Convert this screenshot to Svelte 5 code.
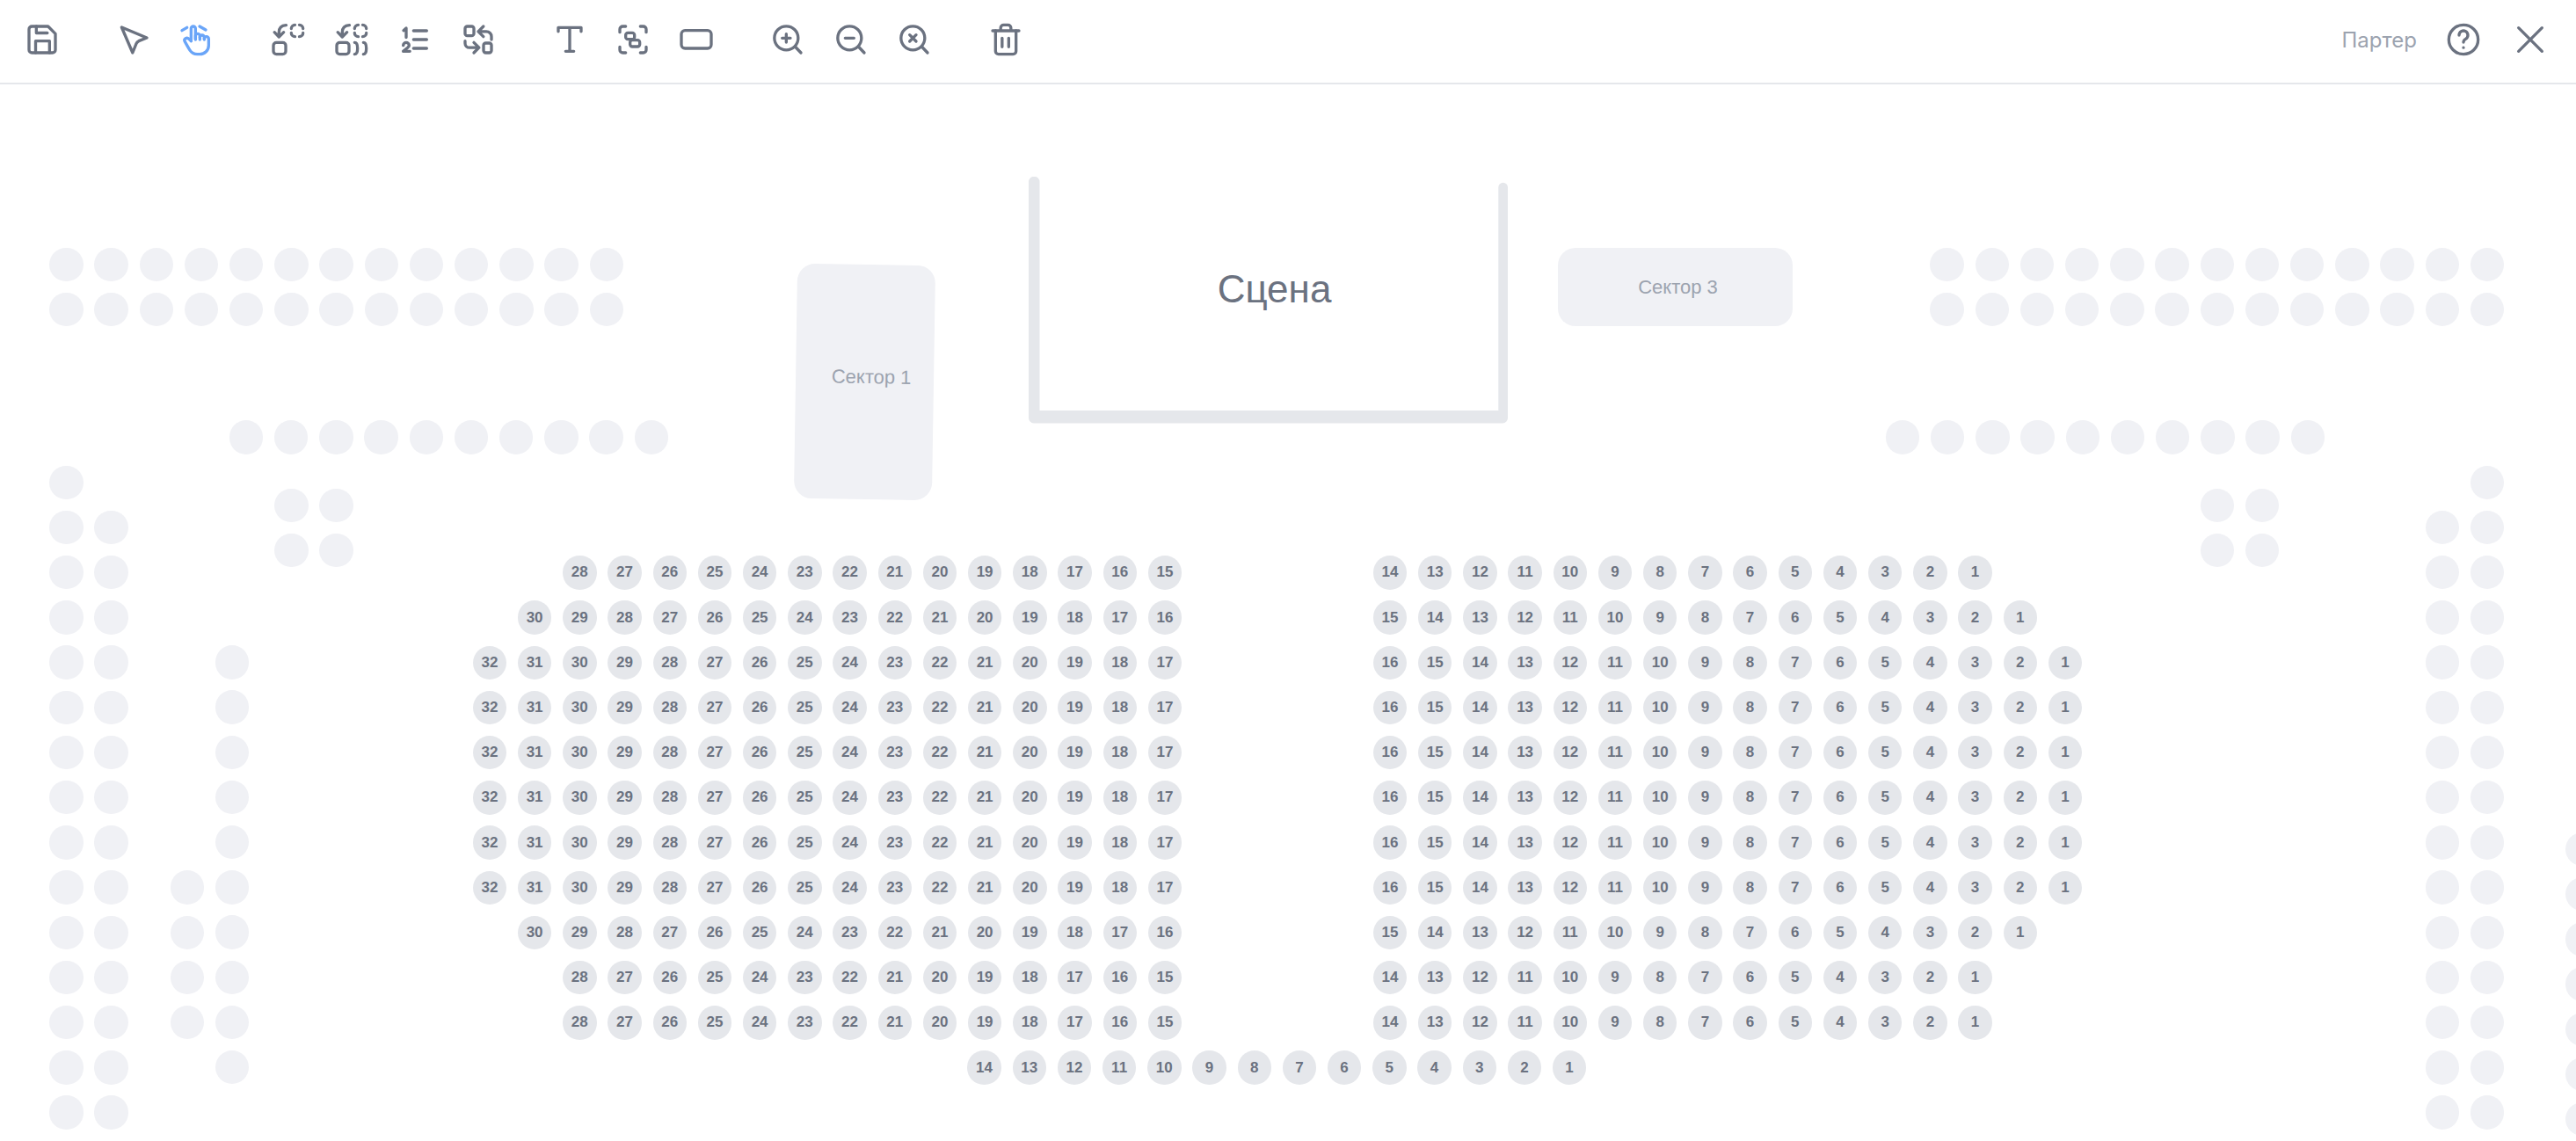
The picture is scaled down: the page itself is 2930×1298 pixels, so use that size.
<script>
	// seat plan geometry, all in page pixels
	const STEP = 51.2;
	const TOP = 96;

	function range(n, fn) {
		return Array.from({ length: n }, (_, i) => fn(i));
	}

	// blank seats (not in the current sector)
	const blank = [];
	function addGrid(x, y, cols, rows) {
		for (let r = 0; r < rows; r++) {
			for (let c = 0; c < cols; c++) {
				blank.push({ x: x + c * STEP, y: y + r * STEP });
			}
		}
	}
	addGrid(75.4, 301, 13, 2);
	addGrid(2214.6, 301, 13, 2);
	addGrid(280, 497.5, 10, 1);
	addGrid(2164, 497.5, 10, 1);
	addGrid(331.3, 574.7, 2, 2);
	addGrid(2522, 574.7, 2, 2);
	addGrid(75.4, 548.7, 1, 16);
	addGrid(126.6, 599.9, 1, 14);
	addGrid(212.8, 1009.6, 1, 4);
	addGrid(263.8, 753.3, 1, 10);
	addGrid(2829, 548.7, 1, 16);
	addGrid(2777.7, 599.9, 1, 14);
	addGrid(2937.5, 966, 1, 7);

	// numbered seats
	const seats = [];
	function addRow(x, y, from, to) {
		for (let n = from, i = 0; n >= to; n--, i++) {
			seats.push({ x: x + i * STEP, y, n });
		}
	}
	const leftRows = [
		[659.3, 28, 15],
		[608.1, 30, 16],
		[556.9, 32, 17],
		[556.9, 32, 17],
		[556.9, 32, 17],
		[556.9, 32, 17],
		[556.9, 32, 17],
		[556.9, 32, 17],
		[608.1, 30, 16],
		[659.3, 28, 15],
		[659.3, 28, 15]
	];
	const rightFrom = [14, 15, 16, 16, 16, 16, 16, 16, 15, 14, 14];
	range(11, (i) => {
		const y = 651.3 + i * STEP;
		addRow(leftRows[i][0], y, leftRows[i][1], leftRows[i][2]);
		addRow(1581, y, rightFrom[i], 1);
	});
	addRow(1119.5, 651.3 + 11 * STEP, 14, 1);
</script>

<div class="page">
	<header class="toolbar">
		<div class="group">
			<button class="tool" aria-label="Сохранить">
				<svg viewBox="0 0 24 24">
					<path d="M3 5a2 2 0 0 1 2-2h11l5 5v11a2 2 0 0 1-2 2H5a2 2 0 0 1-2-2z" />
					<path d="M8 3v4.500h7.500" />
					<path d="M7.500 21v-8h9.500v8" />
				</svg>
			</button>
		</div>
		<div class="group">
			<button class="tool" aria-label="Выделение">
				<svg viewBox="0 0 24 24">
					<path d="M3.800 3.600 21 10.800l-5.500 2.200q-1.200.6-1.700 1.800L11.300 21z" />
				</svg>
			</button>
			<button class="tool active" aria-label="Рука">
				<svg viewBox="0 0 24 24">
					<path d="M8 13V4.500a1.500 1.500 0 0 1 3 0V12" />
					<path d="M11 11.500v-2a1.500 1.500 0 0 1 3 0V12" />
					<path d="M14 10.500a1.500 1.500 0 0 1 3 0V12" />
					<path d="M17 11.500a1.500 1.500 0 0 1 3 0V16a6 6 0 0 1-6 6h-2 .208a6 6 0 0 1-5.012-2.700L7 19c-.312-.479-1.407-2.388-3.286-5.728a1.500 1.500 0 0 1 .536-2.022 1.867 1.867 0 0 1 2.280.280L8 13" />
					<path d="M1.800 5.800 5.200 3.800" />
					<path d="M13.800 3 18 5.400" />
				</svg>
			</button>
		</div>
		<div class="group">
			<button class="tool" aria-label="Добавить место">
				<svg viewBox="0 0 24 24">
					<path d="M10.500 2.200Q5.600 2.500 5.600 7v3M2.500 7l3.100 3.200L8.800 7" />
					<path d="M14 4.500A2.500 2.500 0 0 1 16.500 2M19.500 2A2.500 2.500 0 0 1 22 4.500M22 7.500A2.500 2.500 0 0 1 19.500 10M16.500 10A2.500 2.500 0 0 1 14 7.500" />
					<rect x="1.800" y="14" width="8.400" height="8" rx="2" />
				</svg>
			</button>
			<button class="tool" aria-label="Добавить ряд">
				<svg viewBox="0 0 24 24">
					<path d="M10.500 2.200Q5.600 2.500 5.600 7v3M2.500 7l3.100 3.200L8.800 7" />
					<path d="M14 4.500A2.500 2.500 0 0 1 16.500 2M19.500 2A2.500 2.500 0 0 1 22 4.500M22 7.500A2.500 2.500 0 0 1 19.500 10M16.500 10A2.500 2.500 0 0 1 14 7.500" />
					<rect x="1.800" y="14" width="8.400" height="8" rx="2" />
					<path d="M14 14c1.200 0 2 1.600 2 4s-.8 4-2 4M20 14c1.200 0 2 1.600 2 4s-.8 4-2 4" />
				</svg>
			</button>
			<button class="tool" aria-label="Нумерация">
				<svg viewBox="0 0 24 24">
					<path d="M11 6h9M11 12h9M11 18h9" />
					<path d="M6 10.500V4.200L4.200 5.800" />
					<path d="M4 16a2 2 0 1 1 4 0c0 .6-.5 1-1 1.500L4 20h4.500" />
				</svg>
			</button>
			<button class="tool" aria-label="Поменять местами">
				<svg viewBox="0 0 24 24">
					<rect x="3" y="3" width="6" height="6.400" rx="1.500" />
					<rect x="15.600" y="14.400" width="5.400" height="6.600" rx="1.500" />
					<path d="M12.500 6.500h5A3.500 3.500 0 0 1 21 10v2M15.500 3 12 6.500l3.500 3.500" />
					<path d="M3 13v1.500a3 3 0 0 0 3 3h6.500M9 14l3.500 3.500L9 21" />
				</svg>
			</button>
		</div>
		<div class="group">
			<button class="tool" aria-label="Текст">
				<svg viewBox="0 0 24 24">
					<path d="M4.200 6.500V3.800h15.600v2.700M12 3.800V20M9.200 20h5.600" />
				</svg>
			</button>
			<button class="tool" aria-label="Сгруппировать">
				<svg viewBox="0 0 24 24">
					<path d="M3 7V5a2 2 0 0 1 2-2h2M17 3h2a2 2 0 0 1 2 2v2M21 17v2a2 2 0 0 1-2 2h-2M7 21H5a2 2 0 0 1-2-2v-2" />
					<rect x="7" y="7.400" width="6" height="4.400" rx="1.500" />
					<rect x="10" y="12.400" width="6.600" height="4.400" rx="1.500" />
				</svg>
			</button>
			<button class="tool" aria-label="Прямоугольник">
				<svg viewBox="0 0 24 24">
					<rect x="1.800" y="5.800" width="20.400" height="12.200" rx="2.500" />
				</svg>
			</button>
		</div>
		<div class="group">
			<button class="tool" aria-label="Увеличить">
				<svg viewBox="0 0 24 24">
					<circle cx="11" cy="11" r="8.100" />
					<path d="M17 16.800 21 21M8.200 11h5.600M11 8.200v5.600" />
				</svg>
			</button>
			<button class="tool" aria-label="Уменьшить">
				<svg viewBox="0 0 24 24">
					<circle cx="11" cy="11" r="8.100" />
					<path d="M17 16.800 21 21M8 11h6" />
				</svg>
			</button>
			<button class="tool" aria-label="Сбросить масштаб">
				<svg viewBox="0 0 24 24">
					<circle cx="11" cy="11" r="8.100" />
					<path d="M17 16.800 21 21M8.800 8.800l4.400 4.400M13.200 8.800l-4.400 4.400" />
				</svg>
			</button>
		</div>
		<div class="group">
			<button class="tool" aria-label="Удалить">
				<svg viewBox="0 0 24 24">
					<path d="M3 6h18M8.500 6V4a2 2 0 0 1 2-2h3a2 2 0 0 1 2 2v2" />
					<path d="M5 6v14a2 2 0 0 0 2 2h10a2 2 0 0 0 2-2V6" />
					<path d="M9.500 11v6M14 11v6" />
				</svg>
			</button>
		</div>
		<div class="right">
			<span class="hall">Партер</span>
			<button class="tool" aria-label="Справка">
				<svg viewBox="0 0 24 24">
					<circle cx="12" cy="12" r="10" />
					<path d="M12 17.500v.01M9 9a3 3 0 1 1 4.500 2.600c-1 .6-1.500 1.100-1.500 2.200" />
				</svg>
			</button>
			<button class="tool" aria-label="Закрыть">
				<svg viewBox="0 0 24 24">
					<path d="M4 4l16 16M20 4 4 20" />
				</svg>
			</button>
		</div>
	</header>

	<main class="plan">
		{#each blank as s}
			<span class="seat blank" style="left:{s.x}px;top:{s.y - TOP}px"></span>
		{/each}
		{#each seats as s}
			<span class="seat" style="left:{s.x}px;top:{s.y - TOP}px">{s.n}</span>
		{/each}

		<div class="stage">
			<svg viewBox="0 0 545 281" width="545" height="281">
				<path d="M0 6a6 6 0 0 1 12.500 0V266H534.300V12a5.300 5.300 0 0 1 10.700 0V274a6 6 0 0 1-6 6.500H6a6 6 0 0 1-6-6.500z" />
			</svg>
			<span>Сцена</span>
		</div>
		<div class="sector sector-1">Сектор 1</div>
		<div class="sector sector-3">Сектор 3</div>
	</main>
</div>

<style>
	:global(body) {
		margin: 0;
		background: #fff;
	}

	.page {
		width: 2930px;
		height: 1298px;
		overflow: hidden;
		font-family: 'Liberation Sans', Arial, sans-serif;
	}

	.toolbar {
		display: flex;
		align-items: center;
		gap: 56px;
		box-sizing: border-box;
		height: 96px;
		padding: 0 28px 4px 24px;
		border-bottom: 2px solid #e5e7eb;
	}

	.group {
		display: flex;
		gap: 24px;
	}

	.tool {
		display: flex;
		align-items: center;
		justify-content: center;
		width: 48px;
		height: 48px;
		padding: 0;
		border: 0;
		background: none;
		color: #6b7280;
	}

	.tool.active {
		color: #6aa5f8;
	}

	.tool svg {
		width: 40px;
		height: 40px;
		fill: none;
		stroke: currentColor;
		stroke-width: 2;
		stroke-linecap: round;
		stroke-linejoin: round;
	}

	.right {
		display: flex;
		align-items: center;
		gap: 28.500px;
		margin-left: auto;
	}

	.hall {
		font-family: Inter, 'Liberation Sans', sans-serif;
		font-size: 24px;
		color: #9ca3af;
	}

	.plan {
		position: relative;
		height: 1202px;
		overflow: hidden;
	}

	.seat {
		position: absolute;
		display: flex;
		align-items: center;
		justify-content: center;
		width: 38.400px;
		height: 38.400px;
		margin: -19.200px 0 0 -19.200px;
		border-radius: 50%;
		background: #e5e7eb;
		color: #6b7280;
		font-size: 17px;
		font-weight: 700;
	}

	.seat.blank {
		background: #f0f1f5;
	}

	.stage {
		position: absolute;
		left: 1170px;
		top: 105px;
		display: flex;
		align-items: center;
		justify-content: center;
		box-sizing: border-box;
		width: 545px;
		height: 281px;
		padding: 0 0 26px 14px;
		color: #6b7280;
		font-size: 44px;
	}

	.stage svg {
		position: absolute;
		left: 0;
		top: 0;
		fill: #e5e7eb;
	}

	.sector {
		position: absolute;
		display: flex;
		align-items: center;
		justify-content: center;
		box-sizing: border-box;
		border-radius: 20px;
		background: #f0f1f5;
		color: #9ca3af;
		font-size: 22px;
	}

	.sector-1 {
		left: 905px;
		top: 205px;
		width: 157px;
		height: 267px;
		padding: 0 0 12px 15px;
		transform: rotate(0.9deg);
	}

	.sector-3 {
		left: 1771.500px;
		top: 185.500px;
		width: 267px;
		height: 89px;
		padding: 2px 0 0 7px;
	}
</style>
